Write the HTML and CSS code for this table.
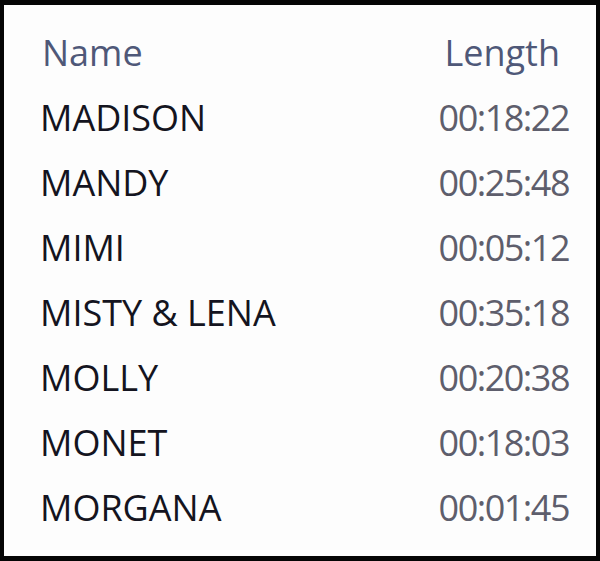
FILE: index.html
```html
<!DOCTYPE html>
<html>
<head>
<meta charset="utf-8">
<link rel="stylesheet" href="styles.css">
</head>
<body>
<div class="frame">
  <div class="list">
    <div class="row head"><span class="name">Name</span><span class="len">Length</span></div>
    <div class="row"><span class="name">MADISON</span><span class="len">00:18:22</span></div>
    <div class="row"><span class="name">MANDY</span><span class="len">00:25:48</span></div>
    <div class="row"><span class="name">MIMI</span><span class="len">00:05:12</span></div>
    <div class="row"><span class="name">MISTY &amp; LENA</span><span class="len">00:35:18</span></div>
    <div class="row"><span class="name">MOLLY</span><span class="len">00:20:38</span></div>
    <div class="row"><span class="name">MONET</span><span class="len">00:18:03</span></div>
    <div class="row"><span class="name">MORGANA</span><span class="len">00:01:45</span></div>
  </div>
</div>
</body>
</html>
```
FILE: styles.css
```css
html, body {
  margin: 0;
  padding: 0;
  background: #000;
}
.frame {
  box-sizing: border-box;
  width: 600px;
  height: 561px;
  border-style: solid;
  border-color: #050505;
  border-width: 5px 4px 5px 4px;
  background: #fdfdfd;
  font-family: "Open Sans", "Noto Sans", sans-serif;
  font-size: 36px;
  font-weight: 500;
}
.list {
  padding: 15px 26px 0 36px;
}
.row {
  display: flex;
  justify-content: space-between;
  height: 65px;
  line-height: 65px;
}
.name {
  color: #141420;
}
.len {
  color: #5e5e6c;
  letter-spacing: -1.5px;
  margin-right: 1px;
}
.head .name {
  color: #4f5878;
  padding-left: 2px;
}
.head .len {
  color: #4f5878;
  letter-spacing: 0;
  margin-right: 0;
  padding-right: 10px;
}
```
